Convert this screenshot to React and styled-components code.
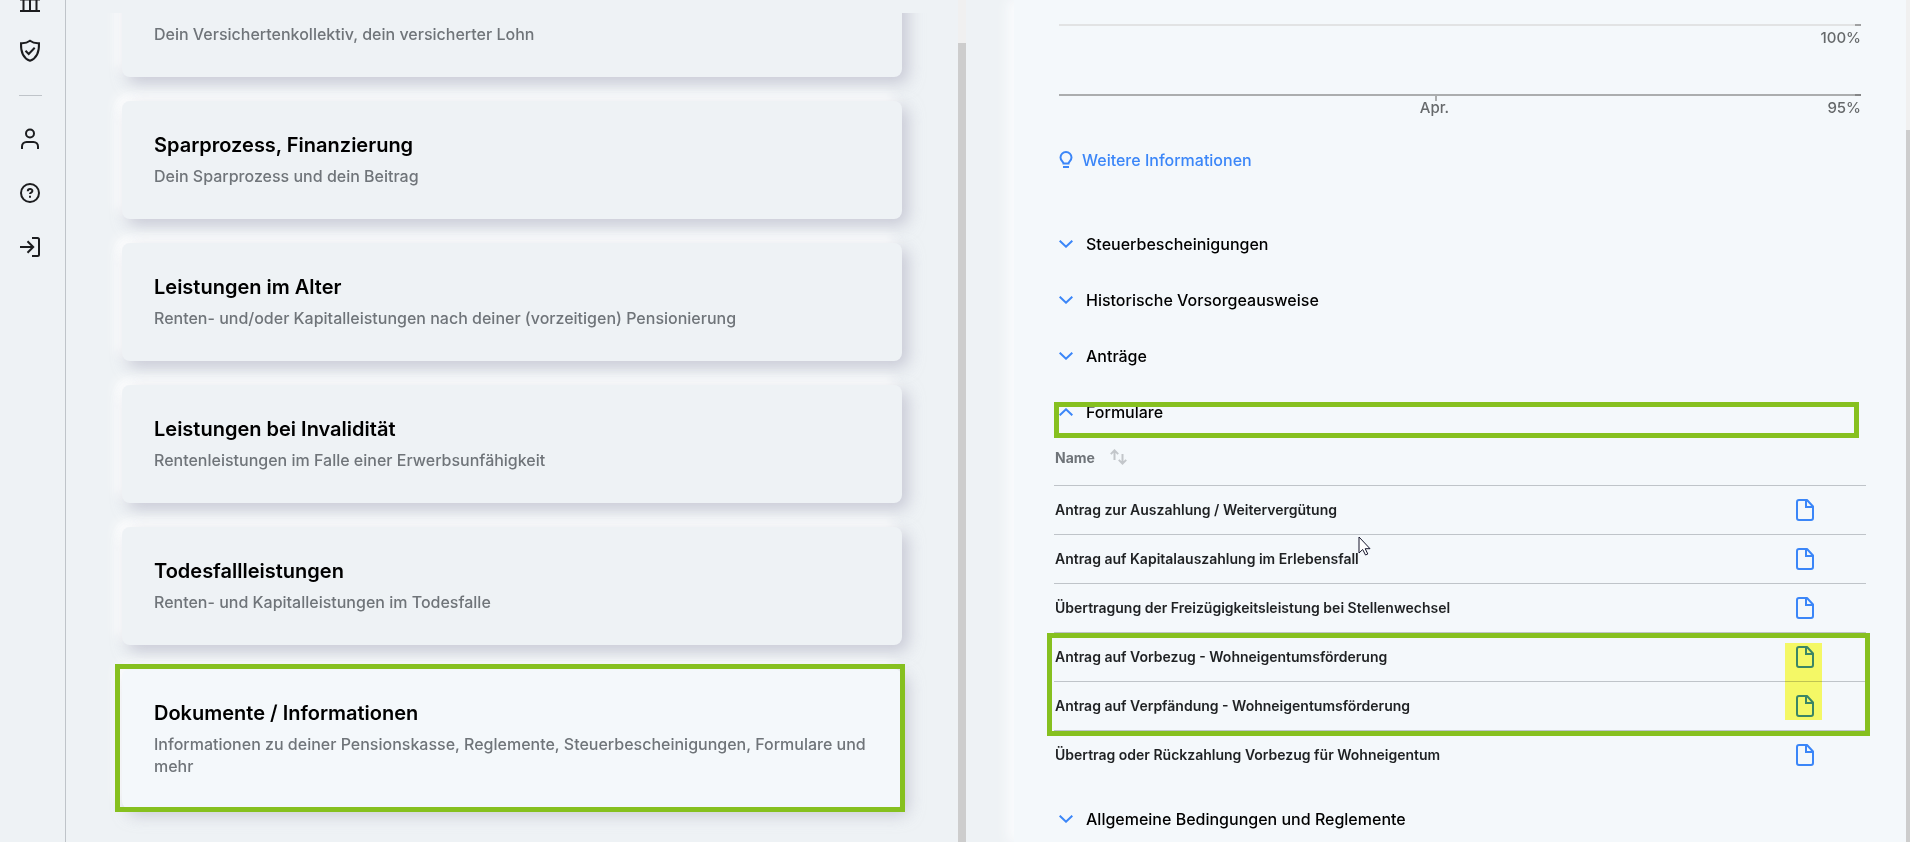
import { useState } from "react";
import styled, { createGlobalStyle, css } from "styled-components";

const cards = [
    { text: "Dein Versichertenkollektiv, dein versicherter Lohn" },
    { title: "Sparprozess, Finanzierung", text: "Dein Sparprozess und dein Beitrag" },
    { title: "Leistungen im Alter", text: "Renten- und/oder Kapitalleistungen nach deiner (vorzeitigen) Pensionierung" },
    { title: "Leistungen bei Invalidität", text: "Rentenleistungen im Falle einer Erwerbsunfähigkeit" },
    { title: "Todesfallleistungen", text: "Renten- und Kapitalleistungen im Todesfalle" },
    { title: "Dokumente / Informationen", text: "Informationen zu deiner Pensionskasse, Reglemente, Steuerbescheinigungen, Formulare und mehr", active: true },
];

const forms = [
    "Antrag zur Auszahlung / Weitervergütung",
    "Antrag auf Kapitalauszahlung im Erlebensfall",
    "Übertragung der Freizügigkeitsleistung bei Stellenwechsel",
    "Antrag auf Vorbezug - Wohneigentumsförderung",
    "Antrag auf Verpfändung - Wohneigentumsförderung",
    "Übertrag oder Rückzahlung Vorbezug für Wohneigentum",
];

function NavIcon({ children }) {
    return (
        <svg width="24" height="24" viewBox="0 0 24 24" fill="none" stroke="currentColor" strokeWidth="2" aria-hidden="true">
            {children}
        </svg>
    );
}

function Chevron({ up }) {
    return (
        <svg width="14" height="8" viewBox="0 0 14 8" fill="none" stroke="#3b86f8" strokeWidth="2" aria-hidden="true">
            <path d={up ? "M.7 7.3 7 1.300l6.300 6" : "M.7.7 7 6.700l6.300-6"} />
        </svg>
    );
}

function FileIcon() {
    return (
        <svg width="18" height="22" viewBox="0 0 18 22" fill="none" stroke="#3b86f8" strokeWidth="2" strokeLinejoin="round" aria-hidden="true">
            <path d="M11 1H3a2 2 0 0 0-2 2v16a2 2 0 0 0 2 2h12a2 2 0 0 0 2-2V7.500L11 1Z" />
            <path d="M10 1v7h7" strokeLinejoin="miter" />
        </svg>
    );
}

function Section({ title, open, marked, onClick }) {
    return (
        <SectionButton type="button" aria-expanded={open} onClick={onClick}>
            <Chevron up={open} />
            {title}
            {marked && <SectionMark />}
        </SectionButton>
    );
}

function FormTable() {
    return (
        <TableWrap>
            <Table>
                <thead>
                    <tr>
                        <th>
                            <SortButton type="button">
                                Name
                                <svg width="17" height="16" viewBox="0 0 17 16" fill="none" stroke="#c2c6ca" strokeWidth="2" aria-hidden="true">
                                    <path d="M4.500 11V1.500M.8 5.100 4.500 1.400l3.700 3.700M12.500 5v9.500M8.800 10.900l3.700 3.700 3.700-3.700" />
                                </svg>
                            </SortButton>
                        </th>
                        <th />
                    </tr>
                </thead>
                <tbody>
                    {forms.map((name) => (
                        <tr key={name}>
                            <td>{name}</td>
                            <IconCell>
                                <FileLink href="#" aria-label={name}>
                                    <FileIcon />
                                </FileLink>
                            </IconCell>
                        </tr>
                    ))}
                </tbody>
            </Table>
            <Highlighter />
            <RowsMark />
            <Pointer width="13" height="20" viewBox="0 0 13 20" aria-hidden="true">
                <path d="M1 1v16l3.700-3.500L7.500 19l2.300-1-2.600-5.300H12Z" fill="#fff" stroke="#15152b" />
            </Pointer>
        </TableWrap>
    );
}

function App() {
    const [open, setOpen] = useState(true);

    return (
        <Page>
            <GlobalStyle />
            <Sidebar>
                <NavLink href="#" aria-label="Kasse">
                    <NavIcon>
                        <path d="M2 9.500h20M5.500 10v11M12 10v11M18.500 10v11M2 21h20" />
                    </NavIcon>
                </NavLink>
                <NavLink href="#" aria-label="Vorsorge">
                    <NavIcon>
                        <path d="M12 1.800C9.500 3.700 6.200 4.400 3 4.200c-.3 8.500 1.300 14.800 9 17.600 7.700-2.800 9.300-9.100 9-17.600-3.200.2-6.500-.5-9-2.400Z" />
                        <path d="m7.500 11.800 3.200 3.200 6-6.200" />
                    </NavIcon>
                </NavLink>
                <Divider />
                <NavLink href="#" aria-label="Profil">
                    <NavIcon>
                        <circle cx="12" cy="6.500" r="4" />
                        <path d="M4 22v-2.500a4.500 4.500 0 0 1 4.500-4.500h7a4.500 4.500 0 0 1 4.500 4.500V22" />
                    </NavIcon>
                </NavLink>
                <NavLink href="#" aria-label="Hilfe">
                    <NavIcon>
                        <circle cx="12" cy="12" r="9" />
                        <path d="M9.800 10.200c0-3 4.600-2.900 4.600-.2 0 1.600-2.400 1.500-2.400 3M12 14.700v2" />
                    </NavIcon>
                </NavLink>
                <NavLink href="#" aria-label="Abmelden">
                    <NavIcon>
                        <path d="M2 12h13M9.500 6.300l5.700 5.700-5.700 5.700M14 3h5.500A1.500 1.500 0 0 1 21 4.500v15a1.500 1.500 0 0 1-1.500 1.500H14" />
                    </NavIcon>
                </NavLink>
            </Sidebar>

            <Columns>
                <Overview>
                    <CardList>
                        {cards.map((card) => (
                            <Card key={card.text} type="button" $active={card.active}>
                                {card.title && <CardTitle>{card.title}</CardTitle>}
                                <CardText>{card.text}</CardText>
                                {card.active && <CardMark />}
                            </Card>
                        ))}
                    </CardList>
                    <Track $offset={43} />
                </Overview>

                <Details>
                    <Content>
                        <Chart>
                            <Axis $color="#e2e3e4" $end="#a0a1a2">
                                <span />
                                <span>100%</span>
                            </Axis>
                            <Axis $color="#abadae" $end="#858687" $tick>
                                <span>Apr.</span>
                                <span>95%</span>
                            </Axis>
                        </Chart>
                        <InfoLink href="#">
                            <svg width="14" height="18" viewBox="0 0 14 18" fill="none" stroke="currentColor" strokeWidth="2" aria-hidden="true">
                                <path d="M4.500 12.500c0-1.800-3-2.900-3-6a5.500 5.500 0 0 1 11 0c0 3.100-3 4.200-3 6ZM4 16h6" />
                            </svg>
                            Weitere Informationen
                        </InfoLink>
                        <Section title="Steuerbescheinigungen" open={false} />
                        <Section title="Historische Vorsorgeausweise" open={false} />
                        <Section title="Anträge" open={false} />
                        <Section title="Formulare" open={open} marked onClick={() => setOpen(!open)} />
                        {open && <FormTable />}
                        <Section title="Allgemeine Bedingungen und Reglemente" open={false} />
                    </Content>
                    <Track $offset={130} />
                </Details>
            </Columns>
        </Page>
    );
}

export default App;

const GlobalStyle = createGlobalStyle`
    * {
        box-sizing: border-box;
    }

    body {
        margin: 0;
        background: #eef2f5;
        color: #000;
        font-family: Inter, "Open Sans", sans-serif;
        font-size: 16px;
        font-weight: 500;
    }

    button {
        border: 0;
        padding: 0;
        background: none;
        color: inherit;
        font: inherit;
        text-align: left;
        cursor: pointer;
    }

    svg {
        display: block;
        flex: none;
    }
`;

const Page = styled.div`
    display: flex;
    height: 100vh;
    overflow: hidden;
`;

const Sidebar = styled.nav`
    flex: none;
    display: flex;
    flex-direction: column;
    align-items: center;
    width: 66px;
    padding-right: 5px;
    border-right: 1px solid #bfc4c9;
`;

const NavLink = styled.a`
    display: flex;
    align-items: center;
    height: 54px;
    color: #1c1d1f;

    &:first-child {
        height: 24px;
        margin: -10px 0 10px;
    }
`;

const Divider = styled.hr`
    width: 23px;
    margin: 17px 0 16px;
    border: 0;
    border-top: 1px solid #bfc4c9;
`;

const Columns = styled.main`
    flex: 1;
    display: flex;
    gap: 48px;
    min-width: 0;
    margin-right: -4px;
`;

const Overview = styled.section`
    flex: 1;
    display: flex;
    min-width: 0;
`;

const CardList = styled.div`
    flex: 1;
    display: flex;
    flex-direction: column;
    gap: 24px;
    margin-top: 13px;
    padding: 0 56px;
    overflow: hidden;
`;

const Card = styled.button`
    position: relative;
    flex: none;
    display: flex;
    flex-direction: column;
    justify-content: flex-end;
    gap: 8px;
    min-height: 118px;
    padding: 32px;
    border-radius: 8px;
    background: ${(props) => (props.$active ? "#f4f8fb" : "#eef2f5")};
    box-shadow: 6px 6px 16px rgba(174, 174, 192, 0.6), -6px -6px 12px #fff;

    &:first-child {
        margin-top: -54px;
    }
`;

const CardTitle = styled.span`
    font-size: 20px;
    font-weight: 600;
    line-height: 24px;
`;

const CardText = styled.span`
    color: #6f7479;
    line-height: 22px;
`;

const mark = css`
    position: absolute;
    border: 5px solid #86c01f;
    pointer-events: none;
`;

const CardMark = styled.span`
    ${mark}
    inset: -5px -3px -3px -7px;
`;

const Track = styled.div`
    flex: none;
    width: 8px;
    padding-top: ${(props) => props.$offset}px;
    background: #f0f0f0;

    &::after {
        content: "";
        display: block;
        height: 100%;
        background: #cdcdcd;
    }
`;

const Details = styled.section`
    flex: 1;
    display: flex;
    min-width: 0;
    background: #f4f8fb;
    box-shadow: -6px 0 12px #fbfcfe;
`;

const Content = styled.div`
    flex: 1;
    min-width: 0;
    padding: 24px 40px 0;
`;

const Chart = styled.div`
    padding: 0 5px;
`;

const Axis = styled.div`
    position: relative;
    display: grid;
    grid-template-columns: 1fr auto;
    height: 70px;
    border-top: 2px solid ${(props) => props.$color};
    color: #66696b;
    font-size: 15px;
    line-height: 24px;

    /* closing tick at the value axis */
    &::after {
        content: "";
        position: absolute;
        top: -2px;
        right: 0;
        width: 6px;
        height: 2px;
        background: ${(props) => props.$end};
    }

    span:first-child {
        position: absolute;
        left: 0;
        right: 51px;
        text-align: center;
    }

    span:last-child {
        grid-column: 2;
    }

    ${(props) =>
        props.$tick &&
        css`
            height: 54px;

            span:first-child::before {
                content: "";
                position: absolute;
                top: 0;
                left: 50%;
                width: 2px;
                height: 5px;
                background: #abadae;
            }
        `}
`;

const InfoLink = styled.a`
    display: flex;
    align-items: center;
    gap: 9px;
    height: 24px;
    margin-bottom: 44px;
    padding-left: 5px;
    color: #3b86f8;
    text-decoration: none;
`;

const SectionButton = styled.button`
    position: relative;
    display: flex;
    align-items: center;
    gap: 13px;
    width: 100%;
    height: 56px;
    padding-left: 5px;
`;

const SectionMark = styled.span`
    ${mark}
    inset: 18px 7px 2px 0;
`;

const TableWrap = styled.div`
    position: relative;
    margin-bottom: 12px;
`;

const Table = styled.table`
    width: 100%;
    border-collapse: collapse;
    color: #1f2123;
    font-size: 14px;
    font-weight: 600;

    tr {
        height: 49px;
        border-bottom: 1px solid #bfc4c9;
    }

    thead tr {
        height: 45px;
    }

    tbody tr:last-child {
        border-bottom: 0;
    }

    th,
    td {
        padding: 0 1px;
    }

    th {
        padding-bottom: 10px;
        color: #6f7479;
        text-align: left;
    }
`;

const SortButton = styled.button`
    display: flex;
    align-items: center;
    gap: 15px;
`;

const IconCell = styled.td`
    width: 71px;
`;

const FileLink = styled.a`
    display: block;
    width: 18px;
`;

const RowsMark = styled.div`
    ${mark}
    top: 193px;
    left: -7px;
    right: -4px;
    height: 103px;
`;

const Highlighter = styled.div`
    position: absolute;
    top: 203px;
    right: 44px;
    width: 37px;
    height: 77px;
    background: #ffff68;
    mix-blend-mode: multiply;
`;

const Pointer = styled.svg`
    position: absolute;
    top: 96px;
    left: 304px;
`;
